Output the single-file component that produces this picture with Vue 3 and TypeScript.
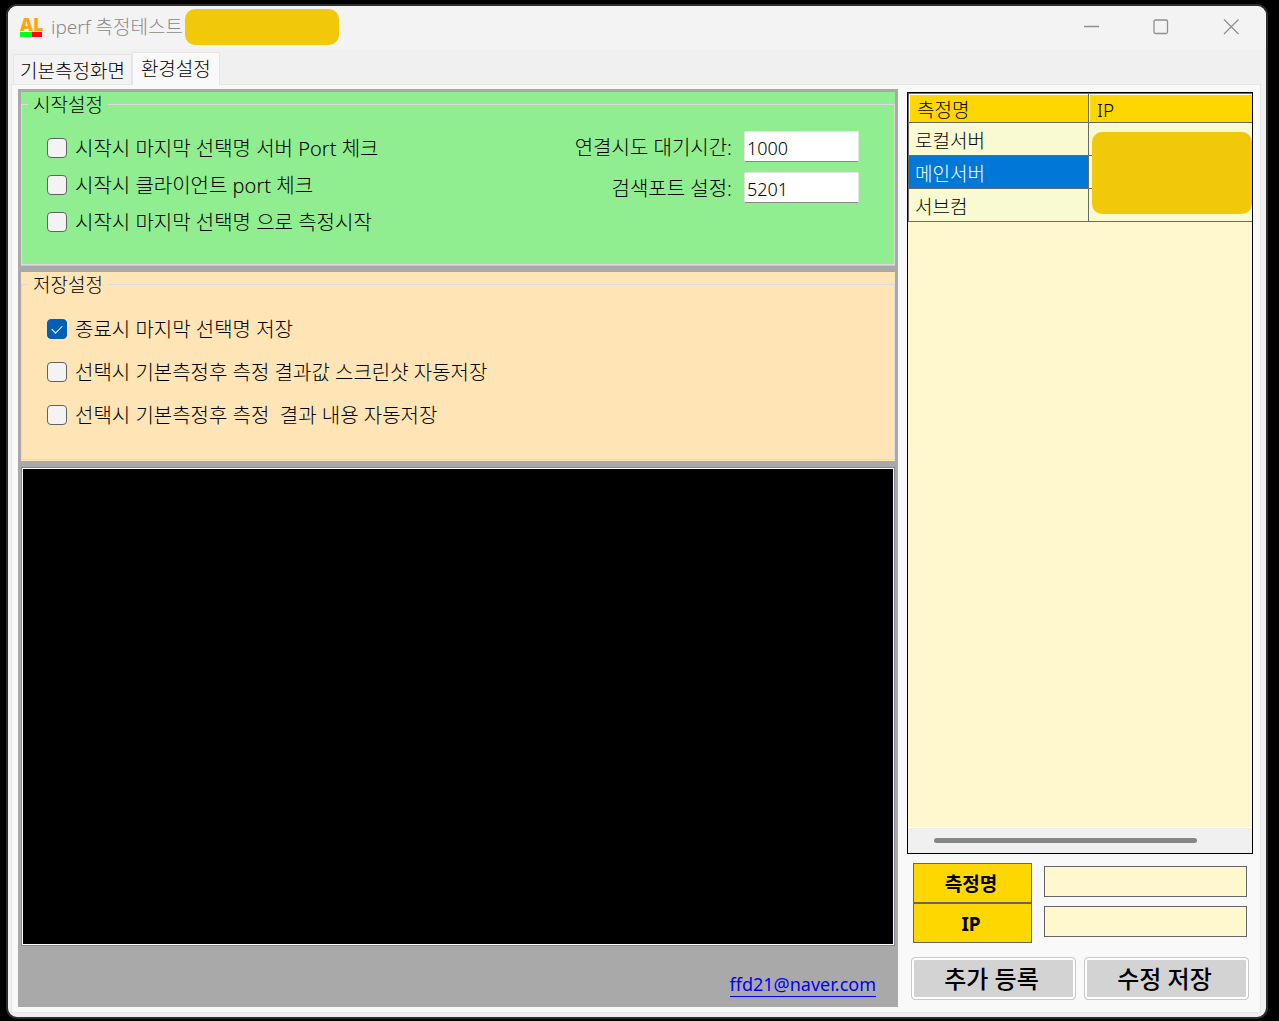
<script setup lang="ts">
import { ref } from 'vue'

interface Option {
  id: string
  label: string
  checked: boolean
}

const tabs = ['기본측정화면', '환경설정']
const activeTab = ref(1)

const startOptions = ref<Option[]>([
  { id: 'start-server', label: '시작시 마지막 선택명 서버 Port 체크', checked: false },
  { id: 'start-client', label: '시작시 클라이언트 port 체크', checked: false },
  { id: 'start-measure', label: '시작시 마지막 선택명 으로 측정시작', checked: false },
])

const saveOptions = ref<Option[]>([
  { id: 'save-last', label: '종료시 마지막 선택명 저장', checked: true },
  { id: 'save-shot', label: '선택시 기본측정후 측정 결과값 스크린샷 자동저장', checked: false },
  { id: 'save-text', label: '선택시 기본측정후 측정  결과 내용 자동저장', checked: false },
])

const waitTime = ref('1000')
const searchPort = ref('5201')

const servers = ['로컬서버', '메인서버', '서브컴']
const selected = ref(1)

const serverName = ref('')
const serverIp = ref('')
</script>

<template>
  <div class="desktop">
    <main class="window">
      <header class="titlebar">
        <svg class="logo" width="26" height="32" viewBox="0 0 26 32" aria-hidden="true">
          <text x="1" y="20" class="logo-text">AL</text>
          <rect x="1" y="21" width="12" height="5" fill="#00ff1e" />
          <rect x="13" y="21" width="10" height="5" fill="#ff0a0a" />
        </svg>
        <h1 class="title">iperf 측정테스트</h1>
        <span class="title-mask"></span>
        <div class="controls">
          <button type="button" class="control" aria-label="최소화">
            <svg width="16" height="16" viewBox="0 0 16 16"><path d="M1 7.5H16" /></svg>
          </button>
          <button type="button" class="control" aria-label="최대화">
            <svg width="16" height="16" viewBox="0 0 16 16"><rect x="1" y="1" width="13.5" height="13.5" rx="1.5" /></svg>
          </button>
          <button type="button" class="control" aria-label="닫기">
            <svg width="16" height="16" viewBox="0 0 16 16"><path d="M1 0.5L15.5 15M15.5 0.5L1 15" /></svg>
          </button>
        </div>
      </header>

      <div class="tabs" role="tablist">
        <button
          v-for="(tab, i) in tabs"
          :key="tab"
          type="button"
          role="tab"
          class="tab"
          :class="{ active: i === activeTab }"
          :aria-selected="i === activeTab"
          @click="activeTab = i"
        >{{ tab }}</button>
      </div>

      <div class="page">
        <section class="settings">
          <div class="group start">
            <fieldset>
              <legend>시작설정</legend>
              <div class="columns">
                <div class="options">
                  <label v-for="o in startOptions" :key="o.id" class="option">
                    <input v-model="o.checked" type="checkbox" />
                    <span>{{ o.label }}</span>
                  </label>
                </div>
                <div class="fields">
                  <div class="field">
                    <label for="wait">연결시도 대기시간:</label>
                    <input id="wait" v-model="waitTime" type="text" />
                  </div>
                  <div class="field">
                    <label for="port">검색포트 설정:</label>
                    <input id="port" v-model="searchPort" type="text" />
                  </div>
                </div>
              </div>
            </fieldset>
          </div>

          <div class="group save">
            <fieldset>
              <legend>저장설정</legend>
              <div class="options">
                <label v-for="o in saveOptions" :key="o.id" class="option">
                  <input v-model="o.checked" type="checkbox" />
                  <span>{{ o.label }}</span>
                </label>
              </div>
            </fieldset>
          </div>

          <textarea class="log" readonly aria-label="로그"></textarea>
          <footer class="contact"><a href="mailto:ffd21@naver.com">ffd21@naver.com</a></footer>
        </section>

        <aside class="side">
          <div class="grid">
            <div class="grid-body">
              <table>
                <thead>
                  <tr><th class="name-col">측정명</th><th>IP</th></tr>
                </thead>
                <tbody>
                  <tr v-for="(name, i) in servers" :key="name" @click="selected = i">
                    <td :class="{ selected: i === selected }">{{ name }}</td>
                    <td></td>
                  </tr>
                </tbody>
              </table>
              <span class="ip-mask"></span>
            </div>
            <div class="scrollbar"><span class="thumb"></span></div>
          </div>

          <form class="entry" @submit.prevent>
            <div class="entry-row">
              <label for="name">측정명</label>
              <input id="name" v-model="serverName" type="text" />
            </div>
            <div class="entry-row">
              <label for="ip">IP</label>
              <input id="ip" v-model="serverIp" type="text" />
            </div>
            <div class="actions">
              <button type="button">추가 등록</button>
              <button type="button">수정 저장</button>
            </div>
          </form>
        </aside>
      </div>
    </main>
  </div>
</template>

<style>
body {
  margin: 0;
  background: #000;
}
</style>

<style scoped>
* {
  box-sizing: border-box;
}

.desktop {
  display: flex;
  min-height: 100vh;
  padding: 4px 11px 2px 6px;
  background: #000;
  color: #000;
  font-family: "Noto Sans", "Noto Sans CJK KR", sans-serif;
  font-size: 19px;
  font-weight: 300;
  line-height: 24px;
}

button,
input,
textarea {
  margin: 0;
  color: inherit;
  font: inherit;
}

.window {
  display: flex;
  flex: 1;
  flex-direction: column;
  overflow: hidden;
  border: 2px solid #2d2d2d;
  border-radius: 11px;
  background: #f0f0f0;
}

.titlebar {
  display: flex;
  align-items: center;
  height: 43px;
  padding: 0 0 2px 11px;
  background: #f3f3f3;
}

.logo-text {
  fill: #ffa514;
  font-family: "Open Sans", sans-serif;
  font-size: 18px;
  font-weight: 800;
}

.title {
  margin: 0 2px 0 6px;
  color: #8a8a8a;
  font-size: 19px;
  font-weight: 300;
}

.title-mask {
  width: 154px;
  height: 36px;
  border-radius: 10px;
  background: #f2c80a;
}

.controls {
  display: flex;
  align-self: stretch;
  margin-left: auto;
}

.control {
  display: grid;
  place-items: center;
  width: 70px;
  padding: 0;
  border: 0;
  background: none;
}

.control svg {
  fill: none;
  stroke: #8f8f8f;
  stroke-width: 1.3;
}

.tabs {
  display: flex;
  align-items: flex-end;
  height: 36px;
  padding-left: 5px;
}

.tab {
  height: 31px;
  padding: 2px 6px 0;
  border: 1px solid #e5e5e5;
  border-bottom: 0;
  background: #f3f3f3;
  white-space: nowrap;
}

.tab.active {
  z-index: 1;
  height: 33px;
  padding: 0 8px;
  background: #f9f9f9;
}

.page {
  display: flex;
  flex: 1;
  gap: 9px;
  margin: -1px 5px 4px 3px;
  padding: 4px 7px 5px 6px;
  border: 1px solid #e5e5e5;
  background: #f9f9f9;
}

.settings {
  display: flex;
  flex: 1;
  flex-direction: column;
  gap: 6px;
  min-width: 0;
  padding: 3px 3px 0;
  background: #a9a9a9;
}

.group {
  padding-bottom: 1px;
}

.start {
  background: #90ee90;
}

.save {
  background: #ffe4b5;
}

fieldset {
  min-width: 0;
  margin: 0;
  padding: 0 35px 0 6px;
  border: 1px solid #dcdcdc;
}

.start fieldset {
  height: 173px;
}

.save fieldset {
  height: 188px;
}

legend {
  padding: 3px 5px 0;
  line-height: 21px;
}

.columns {
  display: flex;
  align-items: flex-start;
  justify-content: space-between;
}

.options {
  display: flex;
  flex-direction: column;
  gap: 11px;
  padding: 19px 0 0 19px;
}

.save .options {
  gap: 17px;
  padding-top: 20px;
}

.option {
  display: flex;
  align-items: center;
  gap: 8px;
  font-size: 20px;
  white-space: pre;
}

.option span {
  padding-top: 2px;
}

.option input {
  display: grid;
  place-items: center;
  width: 20px;
  height: 20px;
  border: 1px solid #626262;
  border-radius: 4px;
  background: #f3f3f3;
  appearance: none;
}

.option input:checked {
  border-color: #005fb8;
  background: #005fb8;
}

.option input:checked::before {
  width: 9px;
  height: 5px;
  margin-bottom: 3px;
  border: solid #fff;
  border-width: 0 0 1px 1px;
  content: "";
  transform: rotate(-45deg);
}

.fields {
  display: flex;
  flex-direction: column;
  gap: 10px;
  padding-top: 15px;
}

.field {
  display: flex;
  align-items: center;
  justify-content: flex-end;
  gap: 12px;
}

.field label {
  padding-top: 2px;
  font-size: 20px;
}

.field input {
  width: 115px;
  height: 31px;
  padding: 2px 2px 0;
  border: 1px solid #e5e5e5;
  border-bottom-color: #868686;
  border-radius: 2px;
  background: #fff;
  font-size: 18px;
}

.log {
  flex: 1;
  width: 100%;
  min-height: 200px;
  padding: 0;
  border: 1px solid #828790;
  outline: 1px solid #fff;
  outline-offset: -2px;
  background: #000;
  color: #fff;
  resize: none;
}

.contact {
  height: 55px;
  padding: 20px 19px 0;
  text-align: right;
}

.contact a {
  display: inline-block;
  border-bottom: 1px solid #00f;
  color: #00f;
  font-size: 18px;
  font-weight: 400;
  line-height: 23px;
  text-decoration: none;
}

.side {
  display: flex;
  flex-direction: column;
  width: 346px;
  padding-top: 3px;
}

.grid {
  display: flex;
  flex: 1;
  flex-direction: column;
  border: 1px solid #000;
  background: #fff8cf;
}

.grid-body {
  position: relative;
  flex: 1;
}

table {
  width: 100%;
  border-spacing: 0;
  border-top: 1px solid #696969;
  border-left: 1px solid #696969;
  table-layout: fixed;
}

th,
td {
  padding: 3px 6px 0;
  border-bottom: 1px solid #696969;
  text-align: left;
}

th {
  height: 29px;
  padding: 3px 8px 0;
  background: #ffd700;
  box-shadow: inset 1px 1px #fff;
  font-weight: inherit;
}

td {
  height: 33px;
  background: #fafad2;
}

th:first-child,
td:first-child {
  border-right: 1px solid #696969;
}

.name-col {
  width: 180px;
}

td.selected {
  background: #0078d7;
  color: #fff;
}

.ip-mask {
  position: absolute;
  top: 39px;
  right: 0;
  width: 160px;
  height: 82px;
  border-radius: 10px;
  background: #f2c80a;
}

.scrollbar {
  display: flex;
  align-items: center;
  height: 26px;
  padding: 0 55px 0 26px;
  border-top: 1px solid #fff;
  background: #f0f0f0;
}

.thumb {
  flex: 1;
  height: 5px;
  border-radius: 3px;
  background: #868686;
}

.entry {
  padding: 9px 4px 7px;
}

.entry-row {
  display: flex;
  align-items: flex-start;
  gap: 12px;
  padding: 0 2px;
}

.entry-row label {
  width: 119px;
  height: 40px;
  padding-right: 3px;
  border: 1px solid #646464;
  background: #ffd700;
  font-weight: 700;
  line-height: 41px;
  text-align: center;
}

.entry-row input {
  flex: 1;
  min-width: 0;
  height: 31px;
  margin-top: 3px;
  padding: 0 4px;
  border: 1px solid #646464;
  background: #fff8cf;
}

.actions {
  display: flex;
  gap: 8px;
  padding-top: 14px;
}

.actions button {
  flex: 1;
  height: 43px;
  padding: 0 4px 0 0;
  border: 1px solid #c8c8c8;
  border-radius: 4px;
  background: #d3d3d3;
  box-shadow: inset 0 0 0 2px #fff;
  font-size: 24px;
  font-weight: 500;
}
</style>
